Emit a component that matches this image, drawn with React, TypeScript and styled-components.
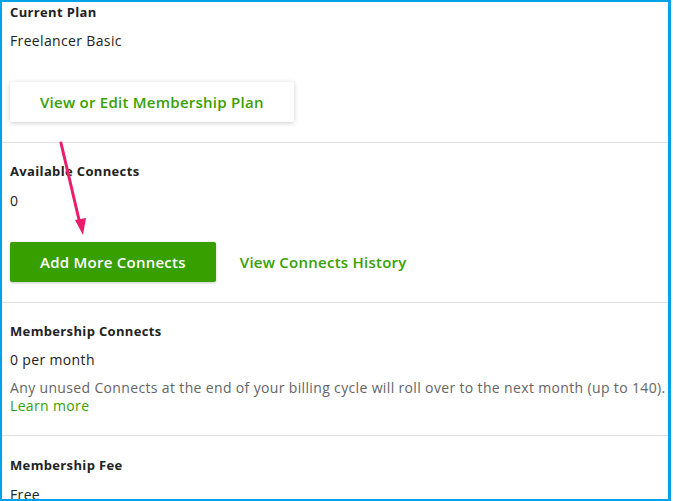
import React from "react";
import styled, { createGlobalStyle } from "styled-components";

const Global = createGlobalStyle`
  html, body { margin: 0; padding: 0; background: #ffffff; }
  body { font-family: "Open Sans", "Liberation Sans", sans-serif; color: #222222; }
  * { box-sizing: border-box; }
`;

const Frame = styled.div`
  position: relative;
  width: 671px;
  height: 501px;
  border-style: solid;
  border-color: #00a2e8;
  border-width: 2px 3px 2px 2px;
  overflow: hidden;
  background: #ffffff;
`;

const Section = styled.section<{ $top: number; $bottom: number; $divider?: boolean }>`
  display: flex;
  flex-direction: column;
  align-items: flex-start;
  padding: ${(p) => p.$top}px 8px ${(p) => p.$bottom}px 8px;
  border-top: ${(p) => (p.$divider ? "1px solid #e0e0e0" : "none")};
`;

const Title = styled.h4`
  margin: 0;
  font-size: 13px;
  font-weight: 700;
  line-height: 20px;
  letter-spacing: 0.35px;
  color: #222222;
`;

const Value = styled.div<{ $gap: number }>`
  margin-top: ${(p) => p.$gap}px;
  font-size: 14px;
  line-height: 20px;
  letter-spacing: 0.35px;
  color: #222222;
`;

const Note = styled.p`
  margin: 9px 0 0 0;
  font-size: 14px;
  line-height: 18px;
  letter-spacing: 0.35px;
  color: #656565;
  white-space: nowrap;
`;

const LinkText = styled.a`
  display: block;
  color: #37a000;
  text-decoration: none;
`;

const Actions = styled.div`
  margin-top: 31px;
  display: flex;
  align-items: center;
  gap: 24px;
`;

const Button = styled.button<{ $primary?: boolean }>`
  height: 40px;
  padding: 0 30px;
  border: none;
  border-radius: 2px;
  font-family: inherit;
  font-size: 15px;
  font-weight: 600;
  letter-spacing: 0.25px;
  cursor: pointer;
  background: ${(p) => (p.$primary ? "#37a000" : "#ffffff")};
  color: ${(p) => (p.$primary ? "#ffffff" : "#37a000")};
  box-shadow: ${(p) =>
    p.$primary ? "0 1px 3px rgba(0,0,0,0.22)" : "0 1px 5px rgba(0,0,0,0.2)"};
`;

const TextLink = styled.a`
  font-size: 15px;
  font-weight: 600;
  letter-spacing: 0.25px;
  color: #37a000;
  text-decoration: none;
`;

const Arrow = styled.svg`
  position: absolute;
  left: 0;
  top: 0;
  pointer-events: none;
`;

export default function App() {
  return (
    <>
      <Global />
      <Frame>
        <Section $top={0} $bottom={20}>
          <Title>Current Plan</Title>
          <Value $gap={9}>Freelancer Basic</Value>
          <Actions>
            <Button>View or Edit Membership Plan</Button>
          </Actions>
        </Section>
        <Section $top={18} $bottom={20} $divider>
          <Title>Available Connects</Title>
          <Value $gap={10}>0</Value>
          <Actions>
            <Button $primary>Add More Connects</Button>
            <TextLink href="#">View Connects History</TextLink>
          </Actions>
        </Section>
        <Section $top={18} $bottom={20} $divider>
          <Title>Membership Connects</Title>
          <Value $gap={9}>0 per month</Value>
          <Note>
            Any unused Connects at the end of your billing cycle will roll over to the next month (up to 140).
            <LinkText href="#">Learn more</LinkText>
          </Note>
        </Section>
        <Section $top={19} $bottom={20} $divider>
          <Title>Membership Fee</Title>
          <Value $gap={10}>Free</Value>
        </Section>
        <Arrow width="671" height="501" viewBox="0 0 671 501">
          <line x1="59" y1="141" x2="78" y2="222" stroke="#ec1b6b" strokeWidth="3" strokeLinecap="round" />
          <polygon points="73,218 84,216 81,233" fill="#ec1b6b" />
        </Arrow>
      </Frame>
    </>
  );
}
